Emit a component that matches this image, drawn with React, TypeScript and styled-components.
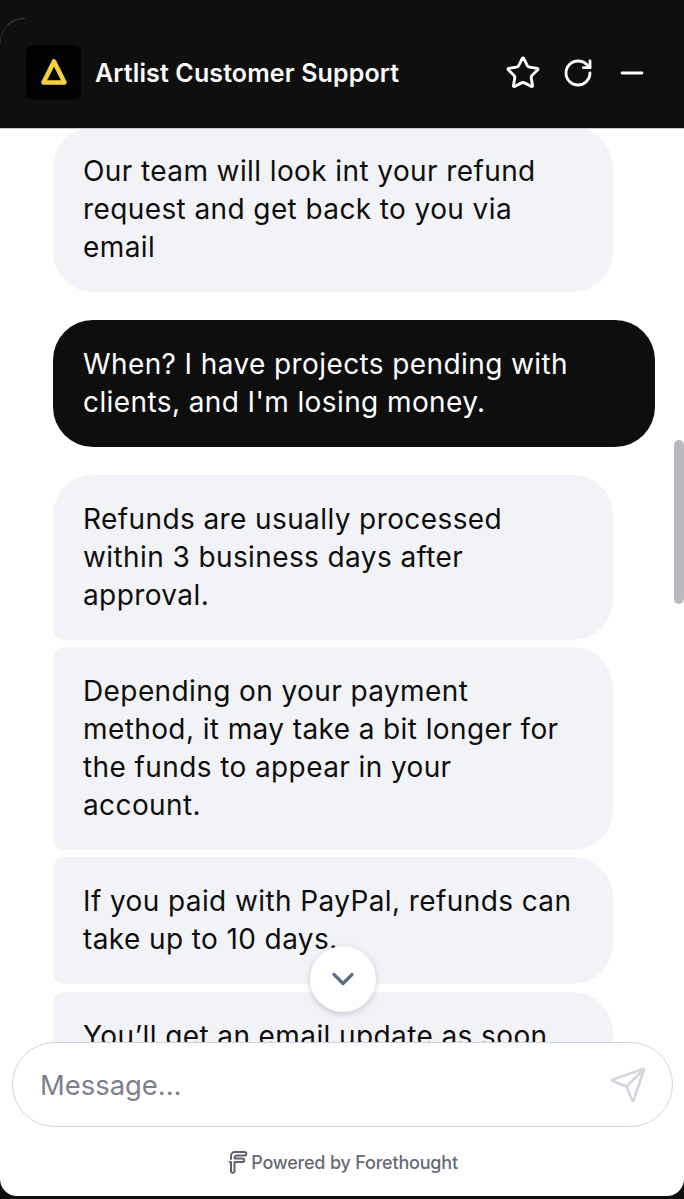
import React from "react";
import styled, { createGlobalStyle } from "styled-components";
import { Star, RotateCw, Minus, ChevronDown, Send } from "lucide-react";

const Global = createGlobalStyle`
  html, body { margin: 0; padding: 0; background: #0a0a0a; }
  * { box-sizing: border-box; }
`;

const Page = styled.div`
  width: 684px;
  height: 1199px;
  padding: 0 0 3px;
  background: #0f0f0f;
  display: flex;
  overflow: hidden;
  font-family: Inter, "Liberation Sans", sans-serif;
`;

const Widget = styled.div`
  position: relative;
  flex: 1;
  display: flex;
  flex-direction: column;
  background: #fff;
  border-radius: 0 0 17px 17px;
  overflow: hidden;
`;

const Header = styled.header`
  position: relative;
  height: 129px;
  flex: none;
  padding: 45px 35px 0 26px;
  display: flex;
  align-items: flex-start;
  background: #0f0f0f;
  border-bottom: 1px solid #c9c9c9;

  &::before {
    content: "";
    position: absolute;
    left: 0;
    top: 18px;
    width: 24px;
    height: 24px;
    border-top: 1px solid #3c3c3c;
    border-left: 1px solid #2c2c2c;
    border-top-left-radius: 24px;
  }
`;

const Logo = styled.div`
  width: 55px;
  height: 55px;
  border-radius: 8px;
  background: #020202;
  display: flex;
  align-items: center;
  justify-content: center;
  padding-bottom: 2px;
`;

const Title = styled.h1`
  margin: 0 0 0 14px;
  height: 55px;
  line-height: 57px;
  font-size: 25px;
  font-weight: 600;
  letter-spacing: 0.12px;
  color: #fbfbfb;
  flex: 1;
`;

const Actions = styled.div`
  display: flex;
  align-items: center;
  height: 55px;
  color: #fff;
`;

const IconSlot = styled.span<{ $w: number; $ml: number }>`
  display: flex;
  justify-content: center;
  align-items: center;
  width: ${(p) => p.$w}px;
  margin-left: ${(p) => p.$ml}px;
`;

const Feed = styled.main`
  flex: 1;
  min-height: 0;
  overflow: hidden;
  padding: 0 29px 0 53px;
  display: flex;
  flex-direction: column;
  margin-top: -2px;
`;

const Bubble = styled.div<{ $tl?: number; $bl?: number; $mt: number }>`
  flex: none;
  width: 560px;
  margin-top: ${(p) => p.$mt}px;
  padding: 24.5px 39px 26.5px 30px;
  background: #f2f3f7;
  color: #0e0e0e;
  font-size: 28px;
  line-height: 38px;
  letter-spacing: 0.4px;
  border-radius: ${(p) => p.$tl ?? 40}px 40px 40px ${(p) => p.$bl ?? 40}px;
`;

const UserBubble = styled(Bubble)`
  width: 602px;
  background: #0e0e0e;
  color: #fff;
`;

const Scrollbar = styled.div`
  position: absolute;
  right: 0;
  top: 440px;
  width: 10px;
  height: 164px;
  border-radius: 5px;
  background: #b9b9c1;
`;

const JumpButton = styled.button`
  position: absolute;
  left: 310px;
  top: 946px;
  width: 66px;
  height: 66px;
  padding: 0;
  border: 0;
  border-radius: 50%;
  background: #fff;
  color: #5a7089;
  display: flex;
  align-items: center;
  justify-content: center;
  box-shadow: 0 2px 6px rgba(40, 50, 70, 0.22);
`;

const Composer = styled.div`
  flex: none;
  margin: 0 11px 0 12px;
  height: 85px;
  padding: 0 25px 0 27px;
  border: 1.5px solid #cfd4de;
  border-radius: 42.5px;
  background: #fff;
  display: flex;
  align-items: center;
  justify-content: space-between;
`;

const Placeholder = styled.span`
  font-size: 27.4px;
  color: #7d7f8d;
`;

const Footer = styled.footer`
  flex: none;
  height: 69px;
  padding: 2px 0 0 2px;
  display: flex;
  align-items: center;
  justify-content: center;
  gap: 3px;
  font-size: 18px;
  font-weight: 500;
  letter-spacing: -0.2px;
  color: #676a75;
`;

export default function App() {
  return (
    <>
      <Global />
      <Page>
        <Widget>
          <Header>
            <Logo>
              <svg width="28" height="28" viewBox="0 0 28 28" fill="none">
                <path d="M14 3.5 L24.5 24.5 H3.5 Z" stroke="#f4d13f" strokeWidth="4.6" strokeLinejoin="round" />
              </svg>
            </Logo>
            <Title>Artlist Customer Support</Title>
            <Actions>
              <IconSlot $w={36} $ml={0}><Star size={36} strokeWidth={1.9} /></IconSlot>
              <IconSlot $w={32} $ml={21}><RotateCw size={32} strokeWidth={2.1} /></IconSlot>
              <IconSlot $w={34} $ml={21}><Minus size={34} strokeWidth={2} /></IconSlot>
            </Actions>
          </Header>
          <Feed>
            <Bubble $mt={0}>Our team will look int your refund request and get back to you via email</Bubble>
            <UserBubble $mt={28}>When? I have projects pending with clients, and I'm losing money.</UserBubble>
            <Bubble $mt={28} $bl={12}>Refunds are usually processed within 3 business days after approval.</Bubble>
            <Bubble $mt={7} $tl={12} $bl={12}>Depending on your payment method, it may take a bit longer for the funds to appear in your account.</Bubble>
            <Bubble $mt={7} $tl={12} $bl={12}>If you paid with PayPal, refunds can take up to 10 days.</Bubble>
            <Bubble $mt={8} $tl={12} $bl={12}>You’ll get an email update as soon as it is done.</Bubble>
          </Feed>
          <Composer>
            <Placeholder>Message...</Placeholder>
            <Send size={38} strokeWidth={1.7} color="#d3d6de" />
          </Composer>
          <Footer>
            <svg width="20" height="26" viewBox="0 0 20 26" fill="none" stroke="#5f626d" strokeWidth="2" strokeLinecap="round" strokeLinejoin="round">
              <path d="M3 9 V6 a4 4 0 0 1 4-4 H16.5 a1.8 1.8 0 0 1 0 3.6 H8.5 a2 2 0 0 0-2 2 V8.5 H14.5 a1.8 1.8 0 0 1 0 3.6 H6.5 V21.5 a1.8 1.8 0 0 1-3.5 0 V12 H1.8" />
            </svg>
            <span>Powered by Forethought</span>
          </Footer>
          <Scrollbar />
          <JumpButton aria-label="Scroll to bottom"><ChevronDown size={36} strokeWidth={2.2} /></JumpButton>
        </Widget>
      </Page>
    </>
  );
}
